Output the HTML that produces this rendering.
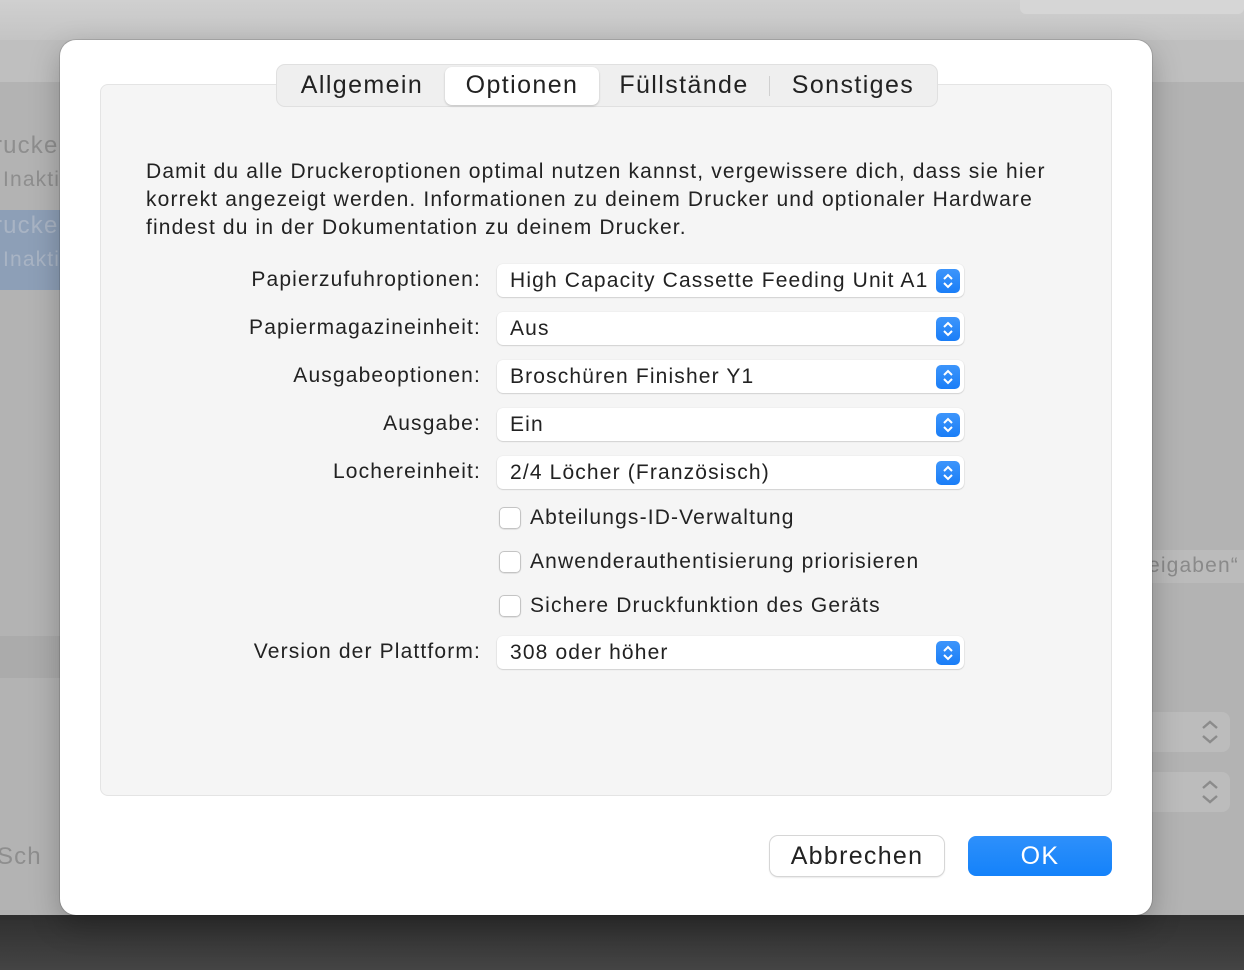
<!DOCTYPE html>
<html><head><meta charset="utf-8"><style>
*{box-sizing:border-box;margin:0;padding:0}
body{width:1244px;height:970px;position:relative;overflow:hidden;font-family:"Liberation Sans",sans-serif;background:#b3b3b3;color:#222;letter-spacing:1.15px}
.abs{position:absolute}
.bgtext{color:#8e8e8e;font-size:24px;white-space:nowrap}
#dlg{left:60px;top:40px;width:1092px;height:875px;background:#fff;border-radius:16px;box-shadow:0 0 0 1px rgba(0,0,0,.12),0 10px 30px rgba(0,0,0,.25)}
#panel{left:100px;top:84px;width:1012px;height:712px;background:#f5f5f5;border:1px solid #e4e4e4;border-radius:8px}
#tabs{left:276px;top:64px;width:662px;height:43px;background:#efefef;border:1px solid #e0e0e0;border-radius:9px}
.tab{position:absolute;top:0;height:41px;line-height:41px;font-size:25px;color:#222;text-align:center;letter-spacing:1.4px}
#sel{left:168px;top:2px;width:154px;height:38px;background:#fff;border-radius:7px;box-shadow:0 1px 2px rgba(0,0,0,.2)}
.p{font-size:21px;white-space:nowrap;color:#222}
.lbl{position:absolute;right:763px;font-size:21px;white-space:nowrap;text-align:right}
.pop{position:absolute;left:497px;width:467px;height:33px;background:#fff;border-radius:6px;box-shadow:0 0.5px 1.5px rgba(0,0,0,.25);font-size:21px;line-height:33px;padding-left:13px;white-space:nowrap}
.st{position:absolute;right:4px;top:5px;width:24px;height:24px;border-radius:5px;background:linear-gradient(#3d95fb,#1a7ef7)}
.cb{position:absolute;left:499px;width:22px;height:22px;background:#fff;border-radius:5px;box-shadow:0 0 0 1px #c4c4c4 inset,0 0.5px 1px rgba(0,0,0,.15)}
.cbl{position:absolute;left:530px;font-size:21px;white-space:nowrap}
.btn{position:absolute;top:836px;height:40px;border-radius:8px;font-size:25px;line-height:40px;text-align:center;letter-spacing:1.3px}
</style></head><body>
<div class="abs" style="left:0;top:0;width:1244px;height:40px;background:linear-gradient(#d0d0d0,#c4c4c4)"></div>
<div class="abs" style="left:1020px;top:0;width:224px;height:14px;background:#d6d6d6;border-radius:0 0 6px 6px"></div>
<div class="abs" style="left:0;top:40px;width:1244px;height:42px;background:#bfbfbf"></div>
<div class="abs" style="left:0;top:210px;width:60px;height:80px;background:#8d9fb7"></div>
<div class="abs bgtext" style="left:-6px;top:132px">rucke</div>
<div class="abs bgtext" style="left:3px;top:168px;font-size:21px">Inakti</div>
<div class="abs bgtext" style="left:-6px;top:212px;color:#a9b4c4">rucke</div>
<div class="abs bgtext" style="left:3px;top:248px;font-size:21px;color:#a9b4c4">Inakti</div>
<div class="abs" style="left:0;top:636px;width:60px;height:42px;background:#ababab"></div>
<div class="abs bgtext" style="left:-3px;top:843px">Sch</div>
<div class="abs" style="left:1152px;top:550px;width:92px;height:33px;background:#bbbbbb"></div>
<div class="abs bgtext" style="left:1148px;top:554px;font-size:21px;color:#8a8a8a">eigaben“</div>
<div class="abs" style="left:1152px;top:712px;width:78px;height:40px;background:#bcbcbc;border-radius:0 8px 8px 0"></div>
<div class="abs" style="left:1152px;top:772px;width:78px;height:40px;background:#bcbcbc;border-radius:0 8px 8px 0"></div>
<svg class="abs" style="left:1200px;top:719px" width="20" height="26"><path d="M3 9l7-6 7 6M3 17l7 6 7-6" stroke="#8b8b8b" stroke-width="2.4" fill="none"/></svg>
<svg class="abs" style="left:1200px;top:779px" width="20" height="26"><path d="M3 9l7-6 7 6M3 17l7 6 7-6" stroke="#8b8b8b" stroke-width="2.4" fill="none"/></svg>
<div class="abs" style="left:0;top:915px;width:1244px;height:55px;background:linear-gradient(#2f2f2f,#444)"></div>

<div id="dlg" class="abs"></div>
<div id="panel" class="abs"></div>
<div id="tabs" class="abs">
 <div id="sel" class="abs"></div>
 <div class="tab" style="left:0;width:170px">Allgemein</div>
 <div class="tab" style="left:168px;width:154px">Optionen</div>
 <div class="tab" style="left:322px;width:170px">Füllstände</div>
 <div class="abs" style="left:492px;top:11px;width:1px;height:20px;background:#d0d0d0"></div>
 <div class="tab" style="left:492px;width:168px">Sonstiges</div>
</div>

<div class="abs p" style="left:146px;top:160px">Damit du alle Druckeroptionen optimal nutzen kannst, vergewissere dich, dass sie hier</div>
<div class="abs p" style="left:146px;top:188px">korrekt angezeigt werden. Informationen zu deinem Drucker und optionaler Hardware</div>
<div class="abs p" style="left:146px;top:216px">findest du in der Dokumentation zu deinem Drucker.</div>

<div class="lbl" style="top:268px">Papierzufuhroptionen:</div>
<div class="pop" style="top:264px">High Capacity Cassette Feeding Unit A1<div class="st"><svg width="24" height="24"><path d="M8 10l4-4 4 4M8 14l4 4 4-4" stroke="#fff" stroke-width="2" fill="none"/></svg></div></div>
<div class="lbl" style="top:316px">Papiermagazineinheit:</div>
<div class="pop" style="top:312px">Aus<div class="st"><svg width="24" height="24"><path d="M8 10l4-4 4 4M8 14l4 4 4-4" stroke="#fff" stroke-width="2" fill="none"/></svg></div></div>
<div class="lbl" style="top:364px">Ausgabeoptionen:</div>
<div class="pop" style="top:360px">Broschüren Finisher Y1<div class="st"><svg width="24" height="24"><path d="M8 10l4-4 4 4M8 14l4 4 4-4" stroke="#fff" stroke-width="2" fill="none"/></svg></div></div>
<div class="lbl" style="top:412px">Ausgabe:</div>
<div class="pop" style="top:408px">Ein<div class="st"><svg width="24" height="24"><path d="M8 10l4-4 4 4M8 14l4 4 4-4" stroke="#fff" stroke-width="2" fill="none"/></svg></div></div>
<div class="lbl" style="top:460px">Lochereinheit:</div>
<div class="pop" style="top:456px">2/4 Löcher (Französisch)<div class="st"><svg width="24" height="24"><path d="M8 10l4-4 4 4M8 14l4 4 4-4" stroke="#fff" stroke-width="2" fill="none"/></svg></div></div>

<div class="cb" style="top:507px"></div><div class="cbl" style="top:506px">Abteilungs-ID-Verwaltung</div>
<div class="cb" style="top:551px"></div><div class="cbl" style="top:550px">Anwenderauthentisierung priorisieren</div>
<div class="cb" style="top:595px"></div><div class="cbl" style="top:594px">Sichere Druckfunktion des Geräts</div>

<div class="lbl" style="top:640px">Version der Plattform:</div>
<div class="pop" style="top:636px">308 oder höher<div class="st"><svg width="24" height="24"><path d="M8 10l4-4 4 4M8 14l4 4 4-4" stroke="#fff" stroke-width="2" fill="none"/></svg></div></div>

<div class="btn" style="left:770px;width:174px;background:#fff;box-shadow:0 0 0 1px #d6d6d6,0 1px 2px rgba(0,0,0,.2)">Abbrechen</div>
<div class="btn" style="left:968px;width:144px;background:linear-gradient(#2e90fb,#1482fa);color:#fff">OK</div>
</body></html>
